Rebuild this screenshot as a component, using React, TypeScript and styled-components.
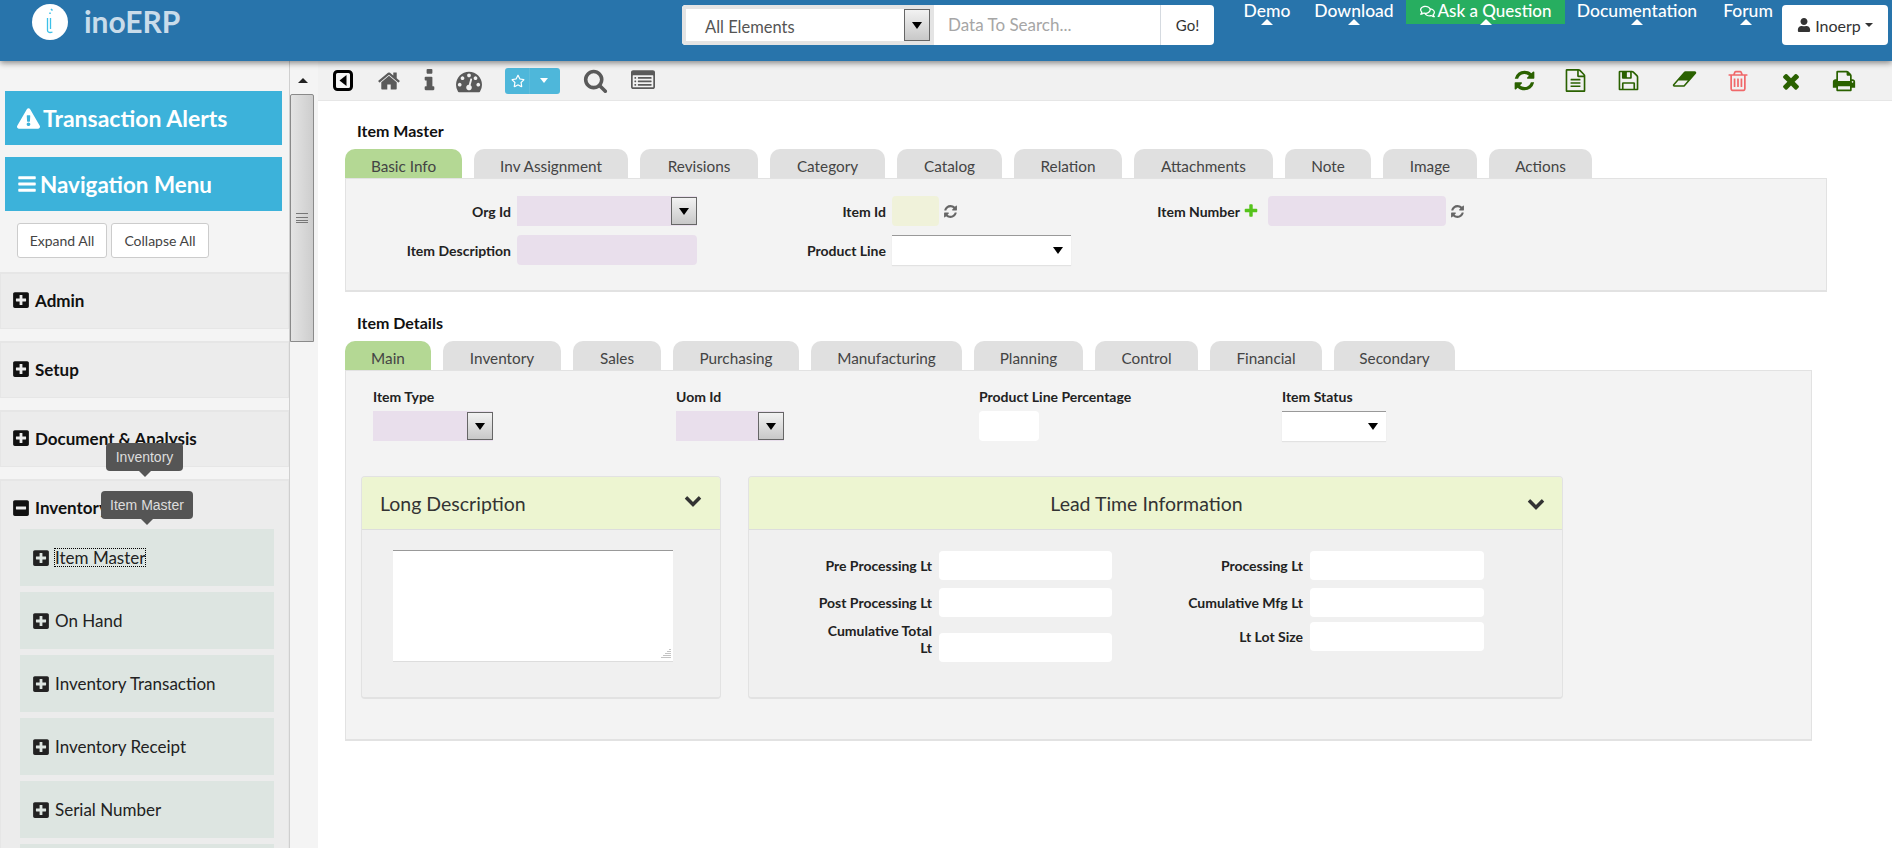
import * as React from 'react';
import styled, { createGlobalStyle } from 'styled-components';
import {
  FaExclamationTriangle, FaBars, FaRegStar, FaRegComments, FaUser, FaPlusSquare, FaMinusSquare,
} from 'react-icons/fa';

const GlobalStyle = createGlobalStyle`
  html, body {
    margin: 0;
    height: 100%;
    overflow: hidden;
    background: #fff;
    font-family: Lato, "Liberation Sans", sans-serif;
    font-size: 14px;
    color: #222;
  }
  * { box-sizing: border-box; }
`;

const glyphs = {
  home: 'M1472 992v480q0 26-19 45t-45 19h-384v-384h-256v384h-384q-26 0-45-19t-19-45v-480q0-1 .5-3t.5-3l575-474 575 474q1 2 1 6zm223-69l-62 74q-8 9-21 11h-3q-13 0-21-7l-692-577-692 577q-12 8-24 7-13-2-21-11l-62-74q-8-10-7-23.5t11-21.5l719-599q32-26 76-26t76 26l244 204v-195q0-14 9-23t23-9h192q14 0 23 9t9 23v408l219 182q10 8 11 21.5t-7 23.5z',
  info: 'M1216 1344v128q0 26-19 45t-45 19h-512q-26 0-45-19t-19-45v-128q0-26 19-45t45-19h64v-384h-64q-26 0-45-19t-19-45v-128q0-26 19-45t45-19h384q26 0 45 19t19 45v576h64q26 0 45 19t19 45zm-128-1152v192q0 26-19 45t-45 19h-256q-26 0-45-19t-19-45v-192q0-26 19-45t45-19h256q26 0 45 19t19 45z',
  dashboard: 'M384 1152q0-53-37.5-90.5t-90.5-37.5-90.5 37.5-37.5 90.5 37.5 90.5 90.5 37.5 90.5-37.5 37.5-90.5zm192-448q0-53-37.5-90.5t-90.5-37.5-90.5 37.5-37.5 90.5 37.5 90.5 90.5 37.5 90.5-37.5 37.5-90.5zm428 481l101-382q6-26-7.5-48.5t-38.5-29.5-48 6.5-30 39.5l-101 382q-60 5-107 43.5t-63 98.5q-20 77 20 146t117 89 146-20 89-117q16-60-6-117t-72-91zm660-33q0-53-37.5-90.5t-90.5-37.5-90.5 37.5-37.5 90.5 37.5 90.5 90.5 37.5 90.5-37.5 37.5-90.5zm-640-640q0-53-37.5-90.5t-90.5-37.5-90.5 37.5-37.5 90.5 37.5 90.5 90.5 37.5 90.5-37.5 37.5-90.5zm448 192q0-53-37.5-90.5t-90.5-37.5-90.5 37.5-37.5 90.5 37.5 90.5 90.5 37.5 90.5-37.5 37.5-90.5zm320 448q0 261-141 483-19 29-54 29h-1402q-35 0-54-29-141-221-141-483 0-182 71-348t191-286 286-191 348-71 348 71 286 191 191 286 71 348z',
  search: 'M1216 832q0-185-131.5-316.5t-316.5-131.5-316.5 131.5-131.5 316.5 131.5 316.5 316.5 131.5 316.5-131.5 131.5-316.5zm512 832q0 52-38 90t-90 38q-54 0-90-38l-343-342q-179 124-399 124-143 0-273.5-55.5t-225-150-150-225-55.5-273.5 55.5-273.5 150-225 225-150 273.5-55.5 273.5 55.5 225 150 150 225 55.5 273.5q0 220-124 399l343 343q37 37 37 90z',
  listAlt: 'M384 1184v64q0 13-9.5 22.5t-22.5 9.5h-64q-13 0-22.5-9.5t-9.5-22.5v-64q0-13 9.5-22.5t22.5-9.5h64q13 0 22.5 9.5t9.5 22.5zm0-256v64q0 13-9.5 22.5t-22.5 9.5h-64q-13 0-22.5-9.5t-9.5-22.5v-64q0-13 9.5-22.5t22.5-9.5h64q13 0 22.5 9.5t9.5 22.5zm0-256v64q0 13-9.5 22.5t-22.5 9.5h-64q-13 0-22.5-9.5t-9.5-22.5v-64q0-13 9.5-22.5t22.5-9.5h64q13 0 22.5 9.5t9.5 22.5zm1152 512v64q0 13-9.5 22.5t-22.5 9.5h-960q-13 0-22.5-9.5t-9.5-22.5v-64q0-13 9.5-22.5t22.5-9.5h960q13 0 22.5 9.5t9.5 22.5zm0-256v64q0 13-9.5 22.5t-22.5 9.5h-960q-13 0-22.5-9.5t-9.5-22.5v-64q0-13 9.5-22.5t22.5-9.5h960q13 0 22.5 9.5t9.5 22.5zm0-256v64q0 13-9.5 22.5t-22.5 9.5h-960q-13 0-22.5-9.5t-9.5-22.5v-64q0-13 9.5-22.5t22.5-9.5h960q13 0 22.5 9.5t9.5 22.5zm128 704v-832q0-13-9.5-22.5t-22.5-9.5h-1472q-13 0-22.5 9.5t-9.5 22.5v832q0 13 9.5 22.5t22.5 9.5h1472q13 0 22.5-9.5t9.5-22.5zm128-1088v1088q0 66-47 113t-113 47h-1472q-66 0-113-47t-47-113v-1088q0-66 47-113t113-47h1472q66 0 113 47t47 113z',
  refresh: 'M1639 1056q0 5-1 7-64 268-268 434.5t-478 166.5q-146 0-282.5-55t-243.5-157l-129 129q-19 19-45 19t-45-19-19-45v-448q0-26 19-45t45-19h448q26 0 45 19t19 45-19 45l-137 137q71 66 161 102t187 36q134 0 250-65t186-179q11-17 53-117 8-23 30-23h192q13 0 22.5 9.5t9.5 22.5zm25-800v448q0 26-19 45t-45 19h-448q-26 0-45-19t-19-45 19-45l138-138q-148-137-349-137-134 0-250 65t-186 179q-11 17-53 117-8 23-30 23h-199q-13 0-22.5-9.5t-9.5-22.5v-7q65-268 270-434.5t480-166.5q146 0 284 55.5t245 156.5l130-129q19-19 45-19t45 19 19 45z',
  file: 'M1596 380q28 28 48 76t20 88v1152q0 40-28 68t-68 28h-1344q-40 0-68-28t-28-68v-1600q0-40 28-68t68-28h896q40 0 88 20t76 48zm-444-244v376h376q-10-29-22-41l-313-313q-12-12-41-22zm384 1528v-1024h-416q-40 0-68-28t-28-68v-416h-768v1536h1280zm-1024-864q0-14 9-23t23-9h704q14 0 23 9t9 23v64q0 14-9 23t-23 9h-704q-14 0-23-9t-9-23v-64zm736 224q14 0 23 9t9 23v64q0 14-9 23t-23 9h-704q-14 0-23-9t-9-23v-64q0-14 9-23t23-9h704zm0 256q14 0 23 9t9 23v64q0 14-9 23t-23 9h-704q-14 0-23-9t-9-23v-64q0-14 9-23t23-9h704z',
  save: 'M512 1536h768v-384h-768v384zm896 0h128v-896q0-14-10-38.5t-20-34.5l-281-281q-10-10-34-20t-39-10v416q0 40-28 68t-68 28h-576q-40 0-68-28t-28-68v-416h-128v1280h128v-416q0-40 28-68t68-28h832q40 0 68 28t28 68v416zm-384-928v-320q0-13-9.5-22.5t-22.5-9.5h-192q-13 0-22.5 9.5t-9.5 22.5v320q0 13 9.5 22.5t22.5 9.5h192q13 0 22.5-9.5t9.5-22.5zm640 32v928q0 40-28 68t-68 28h-1344q-40 0-68-28t-28-68v-1344q0-40 28-68t68-28h928q40 0 88 20t76 48l280 280q28 28 48 76t20 88z',
  eraser: 'M960 1408l336-384h-768l-336 384h768zm1013-1077q15 34 9.5 71.5t-30.5 65.5l-896 1024q-38 44-96 44h-768q-38 0-69.5-20.5t-47.5-54.5q-15-34-9.5-71.5t30.5-65.5l896-1024q38-44 96-44h768q38 0 70 20.5t47 54.5z',
  trash: 'M704 736v576q0 14-9 23t-23 9h-64q-14 0-23-9t-9-23v-576q0-14 9-23t23-9h64q14 0 23 9t9 23zm256 0v576q0 14-9 23t-23 9h-64q-14 0-23-9t-9-23v-576q0-14 9-23t23-9h64q14 0 23 9t9 23zm256 0v576q0 14-9 23t-23 9h-64q-14 0-23-9t-9-23v-576q0-14 9-23t23-9h64q14 0 23 9t9 23zm128 724v-948h-896v948q0 22 7 40.5t14.5 27 10.5 8.5h832q3 0 10.5-8.5t14.5-27 7-40.5zm-672-1076h448l-48-117q-7-9-17-11h-317q-10 2-17 11zm928 32v64q0 14-9 23t-23 9h-96v948q0 83-47 143.5t-113 60.5h-832q-66 0-113-58.5t-47-141.5v-952h-96q-14 0-23-9t-9-23v-64q0-14 9-23t23-9h309l70-167q15-37 54-63t79-26h320q40 0 79 26t54 63l70 167h309q14 0 23 9t9 23z',
  times: 'M1490 1322q0 40-28 68l-136 136q-28 28-68 28t-68-28l-294-294-294 294q-28 28-68 28t-68-28l-136-136q-28-28-28-68t28-68l294-294-294-294q-28-28-28-68t28-68l136-136q28-28 68-28t68 28l294 294 294-294q28-28 68-28t68 28l136 136q28 28 28 68t-28 68l-294 294 294 294q28 28 28 68z',
  print: 'M448 1536h896v-256h-896v256zm0-640h896v-384h-160q-40 0-68-28t-28-68v-160h-640v640zm1152 64q0-26-19-45t-45-19-45 19-19 45 19 45 45 19 45-19 19-45zm128 0v416q0 13-9.5 22.5t-22.5 9.5h-224v160q0 40-28 68t-68 28h-960q-40 0-68-28t-28-68v-160h-224q-13 0-22.5-9.5t-9.5-22.5v-416q0-79 56.5-135.5t135.5-56.5h64v-544q0-40 28-68t68-28h672q40 0 88 20t76 48l152 152q28 28 48 76t20 88v256h64q79 0 135.5 56.5t56.5 135.5z',
  chevron: 'M1683 808l-742 741q-19 19-45 19t-45-19l-742-741q-19-19-19-45.5t19-45.5l166-165q19-19 45-19t45 19l531 531 531-531q19-19 45-19t45 19l166 165q19 19 19 45.5t-19 45.5z',
  plus: 'M1600 736v192q0 40-28 68t-68 28h-416v416q0 40-28 68t-68 28h-192q-40 0-68-28t-28-68v-416h-416q-40 0-68-28t-28-68v-192q0-40 28-68t68-28h416v-416q0-40 28-68t68-28h192q40 0 68 28t28 68v416h416q40 0 68 28t28 68z',
};

function Glyph({ name, size, box = 1792 }: { name: keyof typeof glyphs; size: number; box?: number }) {
  return (
    <svg width={size} height={size} viewBox={`0 0 ${box} ${box}`} fill="currentColor">
      <path d={glyphs[name]} />
    </svg>
  );
}

const Page = styled.div`
  width: 1892px;
  height: 848px;
  display: flex;
  flex-direction: column;
  overflow: hidden;
`;

const Header = styled.header`
  height: 61px;
  flex: none;
  background: #2874ab;
  box-shadow: 0 2px 6px rgba(0, 0, 0, .45);
  display: flex;
  position: relative;
  z-index: 2;
`;

const Brand = styled.div`
  width: 682px;
  padding: 4px 0 0 32px;
  display: flex;
  align-items: flex-start;
  gap: 16px;
  font-size: 30px;
  font-weight: 700;
  line-height: 35px;
  color: #c9dcea;
`;

const Logo = styled.div`
  width: 36px;
  height: 36px;
  border-radius: 50%;
  background: #fff;
`;

const SearchBar = styled.div`
  width: 532px;
  height: 40px;
  margin-top: 5px;
  display: flex;
  background: #fff;
  border-radius: 4px;
  overflow: hidden;
`;

const SearchSelect = styled.div`
  width: 252px;
  background: #fff;
  border: 4px solid #e4e4e4;
  display: flex;
  align-items: center;
  justify-content: space-between;
  padding-left: 19px;
  font-size: 16.5px;
  color: #555;
`;

const SelectText = styled.span`
  padding-top: 3px;
`;

const DropButton = styled.div`
  width: 26px;
  height: 100%;
  flex: none;
  border: 1px solid #666;
  background: linear-gradient(#f2f2f2, #c8c8c8);
  display: flex;
  align-items: center;
  justify-content: center;
`;

const Caret = styled.span`
  width: 0;
  height: 0;
  border-left: 5.5px solid transparent;
  border-right: 5.5px solid transparent;
  border-top: 7px solid #000;
`;

const SearchInput = styled.div`
  flex: 1;
  padding: 0 0 1px 14px;
  display: flex;
  align-items: center;
  font-size: 17px;
  color: #a6a6a6;
`;

const GoButton = styled.div`
  width: 54px;
  border-left: 1px solid #d5dae0;
  display: flex;
  align-items: center;
  justify-content: center;
  font-size: 15px;
  color: #333;
`;

const Nav = styled.nav`
  display: flex;
  margin-left: 18px;
  height: 24px;
`;

const NavItem = styled.a<{ $w: number; $green?: boolean; $pad?: number }>`
  width: ${p => p.$w}px;
  height: 24px;
  padding-left: ${p => p.$pad ?? 0}px;
  line-height: 21px;
  text-align: center;
  font-size: ${p => (p.$green ? 17 : 17.5)}px;
  font-weight: 500;
  color: #fff;
  background: ${p => (p.$green ? '#27ae60' : 'transparent')};
  position: relative;
  white-space: nowrap;
  svg { vertical-align: -2px; margin-right: 3px; }
  &::after {
    content: '';
    position: absolute;
    left: 50%;
    bottom: -1px;
    margin-left: -6px;
    border-left: 6px solid transparent;
    border-right: 6px solid transparent;
    border-bottom: 6px solid #fff;
  }
`;

const UserButton = styled.div`
  width: 106px;
  height: 40px;
  margin-top: 5px;
  border-radius: 4px;
  background: #fff;
  display: flex;
  align-items: center;
  justify-content: center;
  gap: 4px;
  font-size: 16px;
  color: #333;
`;

const SmallCaret = styled.span`
  border-left: 4px solid transparent;
  border-right: 4px solid transparent;
  border-top: 4px solid #333;
`;

const Body = styled.div`
  flex: 1;
  display: flex;
  min-height: 0;
`;

const Sidebar = styled.aside`
  width: 318px;
  flex: none;
  display: flex;
  background: #f4f4f4;
`;

const SideContent = styled.div`
  width: 289px;
  flex: none;
  padding-top: 30px;
  overflow: hidden;
`;

const BigButton = styled.div<{ $size: number }>`
  height: 54px;
  margin: 0 7px 12px 5px;
  background: #3cb2da;
  color: #fff;
  display: flex;
  align-items: center;
  gap: 3px;
  padding-left: 12px;
  font-size: ${p => p.$size}px;
  font-weight: 700;
`;

const ButtonRow = styled.div`
  display: flex;
  gap: 4px;
  padding: 0 0 0 17px;
  margin-bottom: 14px;
`;

const SmallButton = styled.div<{ $w: number }>`
  width: ${p => p.$w}px;
  height: 35px;
  background: #fff;
  border: 1px solid #ccc;
  border-radius: 3px;
  display: flex;
  align-items: center;
  justify-content: center;
  font-size: 14px;
  color: #444;
`;

const Group = styled.div<{ $open?: boolean }>`
  height: ${p => (p.$open ? 'auto' : '57px')};
  margin-bottom: 12px;
  padding: ${p => (p.$open ? '0 14px 0 19px' : '0')};
  background: #ececec;
  border: 1px solid #e6e6e6;
  border-top-width: 2px;
  position: relative;
`;

const GroupTitle = styled.div<{ $open?: boolean }>`
  height: ${p => (p.$open ? '48px' : '52px')};
  padding-top: ${p => (p.$open ? '5px' : '0')};
  margin-left: ${p => (p.$open ? '-8px' : '11px')};
  display: flex;
  align-items: center;
  gap: 5px;
  font-size: 17px;
  font-weight: 700;
  color: #111;
  svg { flex: none; }
`;

const SubItem = styled.div`
  height: 57px;
  margin-bottom: 6px;
  padding-left: 12px;
  background: #dde5e1;
  display: flex;
  align-items: center;
  gap: 5px;
  font-size: 17px;
  color: #222;
`;

const FocusText = styled.span`
  outline: 1px dotted #000;
  line-height: 17px;
`;

const Tooltip = styled.div<{ $top: number; $left: number; $w: number }>`
  position: absolute;
  top: ${p => p.$top}px;
  left: ${p => p.$left}px;
  width: ${p => p.$w}px;
  height: 28px;
  background: #555;
  color: #ddd;
  border-radius: 4px;
  font-family: "Liberation Sans", sans-serif;
  font-size: 14px;
  display: flex;
  align-items: center;
  justify-content: center;
  z-index: 3;
  &::after {
    content: '';
    position: absolute;
    bottom: -6px;
    left: 50%;
    margin-left: -6px;
    border-left: 6px solid transparent;
    border-right: 6px solid transparent;
    border-top: 6px solid #555;
  }
`;

const ScrollTrack = styled.div`
  flex: 1;
  border-left: 1px solid #cfcfcf;
  display: flex;
  flex-direction: column;
  align-items: flex-start;
`;

const ScrollUp = styled.span`
  margin: 17px 0 0 8px;
  border-left: 5px solid transparent;
  border-right: 5px solid transparent;
  border-bottom: 5px solid #222;
`;

const ScrollThumb = styled.div`
  width: 24px;
  height: 248px;
  margin-top: 11px;
  background: linear-gradient(90deg, #e4e4e4, #cdcdcd);
  border: 1px solid #8a8a8a;
  border-radius: 2px 2px 0 0;
  display: flex;
  align-items: center;
  justify-content: center;
`;

const Grip = styled.div`
  width: 12px;
  height: 10px;
  border-top: 1px solid #777;
  border-bottom: 1px solid #777;
  position: relative;
  &::after {
    content: '';
    position: absolute;
    left: 0;
    right: 0;
    top: 3px;
    height: 2px;
    border-top: 1px solid #777;
    border-bottom: 1px solid #777;
  }
`;

const Main = styled.main`
  flex: 1;
  display: flex;
  flex-direction: column;
  min-width: 0;
`;

const Toolbar = styled.div`
  height: 40px;
  flex: none;
  background: #f1f1f1;
  border-bottom: 1px solid #e6e6e6;
  display: flex;
  align-items: center;
  padding-right: 22px;
`;

const ToolIcon = styled.span<{ $w: number; $color?: string }>`
  width: ${p => p.$w}px;
  flex: none;
  display: flex;
  align-items: center;
  justify-content: center;
  color: ${p => p.$color ?? '#5a5a5a'};
`;

const StarButton = styled.div`
  width: 55px;
  height: 26px;
  margin-left: 15px;
  background: #4eb7da;
  border-radius: 3px;
  color: #fff;
  display: flex;
  align-items: center;
  font-size: 13px;
`;

const StarCell = styled.span`
  width: 25px;
  height: 100%;
  padding-left: 2px;
  border-right: 1px solid #5dbddc;
  display: flex;
  align-items: center;
  justify-content: center;
`;

const WhiteCaret = styled.span`
  margin-left: 10px;
  border-left: 4.5px solid transparent;
  border-right: 4.5px solid transparent;
  border-top: 5px solid #fff;
`;

const ToolSpacer = styled.div`
  flex: 1;
`;

const Content = styled.div`
  padding: 20px 0 0 27px;
`;

const SectionTitle = styled.h2<{ $gap?: number }>`
  margin: ${p => p.$gap ?? 0}px 0 9px 12px;
  height: 19px;
  line-height: 19px;
  font-size: 16px;
  font-weight: 700;
  color: #111;
`;

const Tabs = styled.div`
  display: flex;
  gap: 12px;
  height: 29px;
`;

const Tab = styled.div<{ $w: number; $active?: boolean }>`
  width: ${p => p.$w}px;
  padding-top: 4px;
  background: ${p => (p.$active ? '#b4d894' : '#e0e0e0')};
  border-radius: 10px 10px 0 0;
  display: flex;
  align-items: center;
  justify-content: center;
  font-size: 15.3px;
  color: #444;
`;

const TabPanel = styled.div<{ $w: number; $h: number }>`
  width: ${p => p.$w}px;
  height: ${p => p.$h}px;
  background: #f3f3f3;
  border: 1px solid #e2e2e2;
  border-width: 1px 1px 2px 1px;
`;

const TopGrid = styled.div`
  display: grid;
  grid-template-columns: 171px 180px 195px 179px 197px 1fr;
  grid-auto-rows: 30px;
  row-gap: 9px;
  padding-top: 17px;
  align-items: center;
`;

const FieldLabel = styled.label`
  display: block;
  text-align: right;
  padding-right: 6px;
  font-size: 14px;
  font-weight: 700;
  line-height: 17px;
  color: #222;
`;

const Input = styled.div<{ $w: number; $bg?: string }>`
  width: ${p => p.$w}px;
  flex: none;
  height: 30px;
  background: ${p => p.$bg ?? '#fff'};
  border-radius: 4px;
`;

const SelectBox = styled.div<{ $w: number; $bg?: string; $button?: boolean }>`
  width: ${p => p.$w}px;
  height: 30px;
  background: ${p => p.$bg ?? '#fff'};
  border-top: ${p => (p.$button || p.$bg ? '0' : '1px solid #999')};
  box-shadow: ${p => (p.$button ? 'none' : '0 1px 1px #e2e2e2')};
  display: flex;
  align-items: center;
  justify-content: flex-end;
  padding: 1px ${p => (p.$button ? 0 : 8)}px 1px 0;
`;

const InlineField = styled.div`
  display: flex;
  align-items: center;
  gap: 4px;
  color: #666;
`;

const NumberLabel = styled(FieldLabel)`
  display: flex;
  justify-content: flex-end;
  align-items: center;
  gap: 3px;
  padding-right: 9px;
  svg { color: #55c31b; }
`;

const DetailFields = styled.div`
  display: flex;
  padding: 17px 0 0 27px;
  height: 95px;
`;

const StackField = styled.div<{ $w: number }>`
  width: ${p => p.$w}px;
  display: flex;
  flex-direction: column;
  gap: 6px;
`;

const StackLabel = styled.label`
  font-size: 14px;
  font-weight: 700;
  line-height: 17px;
  color: #222;
`;

const Boxes = styled.div`
  display: flex;
  gap: 27px;
  padding: 10px 0 0 15px;
`;

const Box = styled.section<{ $w: number }>`
  width: ${p => p.$w}px;
  height: 223px;
  background: #f0f0f0;
  border: 1px solid #e2e2e2;
  border-bottom-width: 2px;
  border-radius: 4px;
  overflow: hidden;
`;

const BoxHead = styled.div<{ $center?: boolean }>`
  height: 53px;
  background: #edf5d1;
  border-bottom: 1px solid #ddd;
  display: flex;
  align-items: center;
  justify-content: ${p => (p.$center ? 'center' : 'space-between')};
  padding: 0 18px 0 ${p => (p.$center ? 0 : 18)}px;
  font-size: 19.5px;
  color: #333;
  position: relative;
`;

const ChevronWrap = styled.span<{ $abs?: boolean }>`
  display: flex;
  color: #333;
  margin-top: -7px;
  ${p => (p.$abs ? 'position: absolute; right: 17px; top: 17px; margin: 0;' : '')}
`;

const TextArea = styled.div`
  width: 280px;
  height: 112px;
  margin: 20px 0 0 31px;
  background: #fff;
  border-top: 1px solid #999;
  border-bottom: 1px solid #ddd;
  position: relative;
`;

const ResizeGrip = styled.svg`
  position: absolute;
  right: 2px;
  bottom: 2px;
  width: 11px;
  height: 11px;
`;

const LeadColumns = styled.div`
  display: flex;
  padding-top: 21px;
`;

const LeadColumn = styled.div<{ $label: number; $input: number }>`
  display: grid;
  grid-template-columns: ${p => p.$label}px ${p => p.$input}px;
  align-content: start;
`;

const LeadRow = styled.div<{ $gap: number }>`
  display: contents;
  & > div { margin-bottom: ${p => p.$gap}px; }
`;

const LeadLabel = styled(FieldLabel)<{ $up?: boolean }>`
  padding-right: 7px;
  align-self: start;
  margin-top: ${p => (p.$up ? '-11px' : '6px')};
`;

const LeadInput = styled.div<{ $gap?: number }>`
  height: 29px;
  background: #fff;
  border-radius: 4px;
`;

const topTabs: [string, number][] = [
  ['Basic Info', 117], ['Inv Assignment', 154], ['Revisions', 118], ['Category', 115], ['Catalog', 105],
  ['Relation', 108], ['Attachments', 139], ['Note', 86], ['Image', 94], ['Actions', 103],
];
const detailTabs: [string, number][] = [
  ['Main', 86], ['Inventory', 118], ['Sales', 88], ['Purchasing', 126], ['Manufacturing', 151],
  ['Planning', 109], ['Control', 103], ['Financial', 112], ['Secondary', 121],
];
const subItems = ['On Hand', 'Inventory Transaction', 'Inventory Receipt', 'Serial Number'];
const lilac = '#e9dfec';
const green = '#2a6100';

export default function App() {
  return (
    <Page>
      <GlobalStyle />
      <Header>
        <Brand>
          <Logo>
            <svg width="36" height="36" viewBox="0 0 36 36" fill="none" stroke="#3cc0e8">
              <path d="M19 5l1.500 1.500M18 8.500v1.500" strokeWidth="1.500" />
              <path d="M15.500 14v12.500c0 2 2.500 2.500 5 1.500M18.500 14v11" strokeWidth="1.300" />
            </svg>
          </Logo>
          inoERP
        </Brand>
        <SearchBar>
          <SearchSelect>
            <SelectText>All Elements</SelectText>
            <DropButton><Caret /></DropButton>
          </SearchSelect>
          <SearchInput>Data To Search...</SearchInput>
          <GoButton>Go!</GoButton>
        </SearchBar>
        <Nav>
          <NavItem $w={70}>Demo</NavItem>
          <NavItem $w={104}>Download</NavItem>
          <NavItem $w={159} $green><FaRegComments size={15} />Ask a Question</NavItem>
          <NavItem $w={144}>Documentation</NavItem>
          <NavItem $w={73} $pad={5}>Forum</NavItem>
        </Nav>
        <UserButton><FaUser size={14} />Inoerp<SmallCaret /></UserButton>
      </Header>
      <Body>
        <Sidebar>
          <SideContent>
            <BigButton $size={23}><FaExclamationTriangle size={23} />Transaction Alerts</BigButton>
            <BigButton $size={22.4}><FaBars size={20} />Navigation Menu</BigButton>
            <ButtonRow>
              <SmallButton $w={90}>Expand All</SmallButton>
              <SmallButton $w={98}>Collapse All</SmallButton>
            </ButtonRow>
            <Group><GroupTitle><FaPlusSquare size={18} />Admin</GroupTitle></Group>
            <Group><GroupTitle><FaPlusSquare size={18} />Setup</GroupTitle></Group>
            <Group><GroupTitle><FaPlusSquare size={18} />Document &amp; Analysis</GroupTitle></Group>
            <Group $open>
              <Tooltip $top={-38} $left={105} $w={77}>Inventory</Tooltip>
              <Tooltip $top={10} $left={100} $w={92}>Item Master</Tooltip>
              <GroupTitle $open><FaMinusSquare size={18} />Inventory</GroupTitle>
              <SubItem><FaPlusSquare size={18} /><FocusText>Item Master</FocusText></SubItem>
              {subItems.map(s => <SubItem key={s}><FaPlusSquare size={18} />{s}</SubItem>)}
              <SubItem />
            </Group>
          </SideContent>
          <ScrollTrack>
            <ScrollUp />
            <ScrollThumb><Grip /></ScrollThumb>
          </ScrollTrack>
        </Sidebar>
        <Main>
          <Toolbar>
            <ToolIcon $w={50} $color="#000">
              <svg width="20" height="21" viewBox="0 0 20 21">
                <rect x="1.500" y="1.500" width="17" height="18" rx="3" fill="#f4f4f4" stroke="#000" strokeWidth="3" />
                <path d="M13.500 5v11l-7-5.500z" fill="#000" />
              </svg>
            </ToolIcon>
            <ToolIcon $w={42}><Glyph name="home" size={24} /></ToolIcon>
            <ToolIcon $w={38}><Glyph name="info" size={27} /></ToolIcon>
            <ToolIcon $w={42}><Glyph name="dashboard" size={26} /></ToolIcon>
            <StarButton><StarCell><FaRegStar size={14} /></StarCell><WhiteCaret /></StarButton>
            <ToolIcon $w={71}><Glyph name="search" size={25} /></ToolIcon>
            <ToolIcon $w={24}><Glyph name="listAlt" size={25} /></ToolIcon>
            <ToolSpacer />
            <ToolIcon $w={52} $color={green}><Glyph name="refresh" size={23} /></ToolIcon>
            <ToolIcon $w={51} $color={green}><Glyph name="file" size={23} /></ToolIcon>
            <ToolIcon $w={54} $color={green}><Glyph name="save" size={23} /></ToolIcon>
            <ToolIcon $w={58} $color={green}><Glyph name="eraser" size={25} box={2048} /></ToolIcon>
            <ToolIcon $w={50} $color="#f0686a"><Glyph name="trash" size={24} /></ToolIcon>
            <ToolIcon $w={55} $color={green}><Glyph name="times" size={24} /></ToolIcon>
            <ToolIcon $w={52} $color={green}><Glyph name="print" size={24} /></ToolIcon>
          </Toolbar>
          <Content>
            <SectionTitle>Item Master</SectionTitle>
            <Tabs>
              {topTabs.map(([t, w], i) => <Tab key={t} $w={w} $active={i === 0}>{t}</Tab>)}
            </Tabs>
            <TabPanel $w={1482} $h={114}>
              <TopGrid>
                <FieldLabel>Org Id</FieldLabel>
                <SelectBox $w={180} $bg={lilac} $button><DropButton><Caret /></DropButton></SelectBox>
                <FieldLabel>Item Id</FieldLabel>
                <InlineField>
                  <Input $w={47} $bg="#f0f2da" />
                  <Glyph name="refresh" size={15} />
                </InlineField>
                <NumberLabel>Item Number <Glyph name="plus" size={16} /></NumberLabel>
                <InlineField>
                  <Input $w={178} $bg={lilac} />
                  <Glyph name="refresh" size={15} />
                </InlineField>
                <FieldLabel>Item Description</FieldLabel>
                <Input $w={180} $bg={lilac} />
                <FieldLabel>Product Line</FieldLabel>
                <SelectBox $w={179}><Caret /></SelectBox>
              </TopGrid>
            </TabPanel>
            <SectionTitle $gap={21}>Item Details</SectionTitle>
            <Tabs>
              {detailTabs.map(([t, w], i) => <Tab key={t} $w={w} $active={i === 0}>{t}</Tab>)}
            </Tabs>
            <TabPanel $w={1467} $h={371}>
              <DetailFields>
                <StackField $w={303}>
                  <StackLabel>Item Type</StackLabel>
                  <SelectBox $w={120} $bg={lilac} $button><DropButton><Caret /></DropButton></SelectBox>
                </StackField>
                <StackField $w={303}>
                  <StackLabel>Uom Id</StackLabel>
                  <SelectBox $w={108} $bg={lilac} $button><DropButton><Caret /></DropButton></SelectBox>
                </StackField>
                <StackField $w={303}>
                  <StackLabel>Product Line Percentage</StackLabel>
                  <Input $w={60} />
                </StackField>
                <StackField $w={200}>
                  <StackLabel>Item Status</StackLabel>
                  <SelectBox $w={104}><Caret /></SelectBox>
                </StackField>
              </DetailFields>
              <Boxes>
                <Box $w={360}>
                  <BoxHead>
                    Long Description
                    <ChevronWrap><Glyph name="chevron" size={18} /></ChevronWrap>
                  </BoxHead>
                  <TextArea>
                    <ResizeGrip viewBox="0 0 11 11">
                      <path d="M10 1v1M8 3v1M10 3v1M6 5v1M8 5v1M10 5v1M4 7v1M6 7v1M8 7v1M10 7v1M2 9v1M4 9v1M6 9v1M8 9v1M10 9v1" stroke="#888" />
                    </ResizeGrip>
                  </TextArea>
                </Box>
                <Box $w={815}>
                  <BoxHead $center>
                    Lead Time Information
                    <ChevronWrap $abs><Glyph name="chevron" size={18} /></ChevronWrap>
                  </BoxHead>
                  <LeadColumns>
                    <LeadColumn $label={190} $input={173}>
                      <LeadRow $gap={8}>
                        <LeadLabel>Pre Processing Lt</LeadLabel>
                        <LeadInput />
                      </LeadRow>
                      <LeadRow $gap={16}>
                        <LeadLabel>Post Processing Lt</LeadLabel>
                        <LeadInput />
                      </LeadRow>
                      <LeadRow $gap={0}>
                        <LeadLabel $up>Cumulative Total<br />Lt</LeadLabel>
                        <LeadInput />
                      </LeadRow>
                    </LeadColumn>
                    <LeadColumn $label={198} $input={174}>
                      <LeadRow $gap={8}>
                        <LeadLabel>Processing Lt</LeadLabel>
                        <LeadInput />
                      </LeadRow>
                      <LeadRow $gap={5}>
                        <LeadLabel>Cumulative Mfg Lt</LeadLabel>
                        <LeadInput />
                      </LeadRow>
                      <LeadRow $gap={0}>
                        <LeadLabel>Lt Lot Size</LeadLabel>
                        <LeadInput />
                      </LeadRow>
                    </LeadColumn>
                  </LeadColumns>
                </Box>
              </Boxes>
            </TabPanel>
          </Content>
        </Main>
      </Body>
    </Page>
  );
}
